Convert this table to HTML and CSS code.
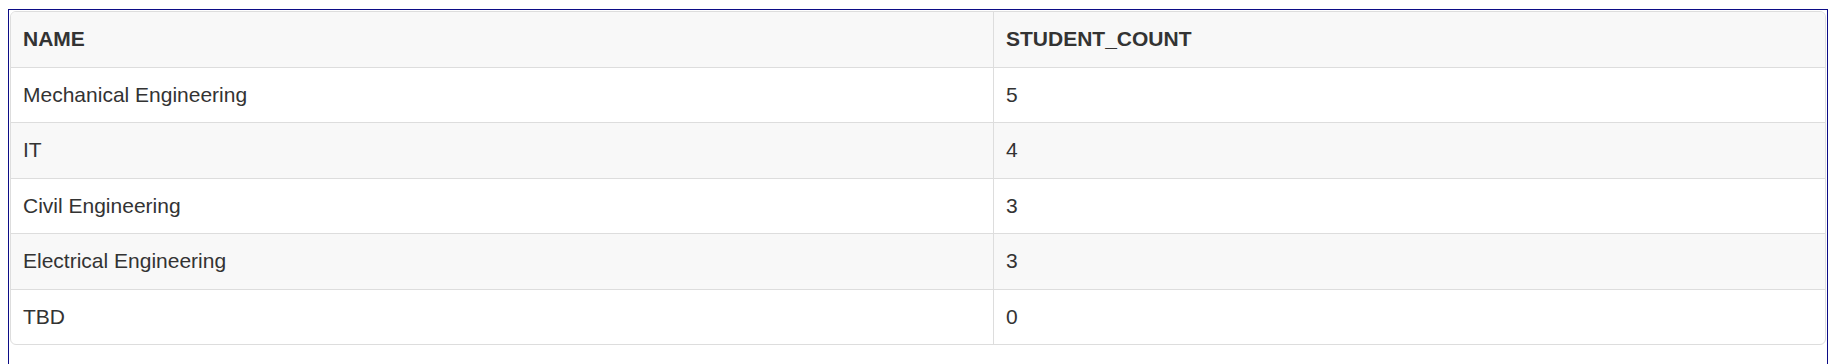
FILE: index.html
```html
<!DOCTYPE html>
<html>
<head>
<meta charset="utf-8">
<link rel="stylesheet" href="styles.css">
</head>
<body>
<div class="frame">
  <div class="table-wrap">
    <table class="grid">
      <thead>
        <tr><th class="col-name">NAME</th><th>STUDENT_COUNT</th></tr>
      </thead>
      <tbody>
        <tr><td>Mechanical Engineering</td><td>5</td></tr>
        <tr class="alt"><td>IT</td><td>4</td></tr>
        <tr><td>Civil Engineering</td><td>3</td></tr>
        <tr class="alt"><td>Electrical Engineering</td><td>3</td></tr>
        <tr class="last"><td>TBD</td><td>0</td></tr>
      </tbody>
    </table>
  </div>
</div>
</body>
</html>
```
FILE: styles.css
```css
html, body {
  margin: 0;
  padding: 0;
  background: #fff;
  overflow: hidden;
}
body {
  padding: 9px 8px 0 8px;
  font-family: "Liberation Sans", Arial, sans-serif;
  color: #333;
}
.frame {
  width: 1820px;
  height: 355px;
  box-sizing: border-box;
  border: 1px solid #0c0c86;
  border-bottom: none;
  padding: 1px 1px 0 1px;
}
.table-wrap {
  border: 1px solid #ddd;
  border-radius: 6px;
  overflow: hidden;
  width: 1816px;
  box-sizing: border-box;
}
.grid {
  width: 100%;
  border-collapse: collapse;
  font-size: 21px;
  line-height: 30px;
}
.grid th, .grid td {
  text-align: left;
  padding: 12.25px 12px 12.25px 12px;
  border-top: 1px solid #ddd;
  border-left: 1px solid #ddd;
  vertical-align: top;
}
.grid th:first-child, .grid td:first-child {
  border-left: none;
}
.grid thead th {
  border-top: none;
  border-bottom: 1px solid #ddd;
  background: #f8f8f8;
  font-weight: bold;
  color: #333;
}
.grid .col-name {
  width: 958px;
}
.grid tbody tr:first-child td {
  border-top: none;
}
.grid tr.alt td {
  background: #f8f8f8;
}
```
